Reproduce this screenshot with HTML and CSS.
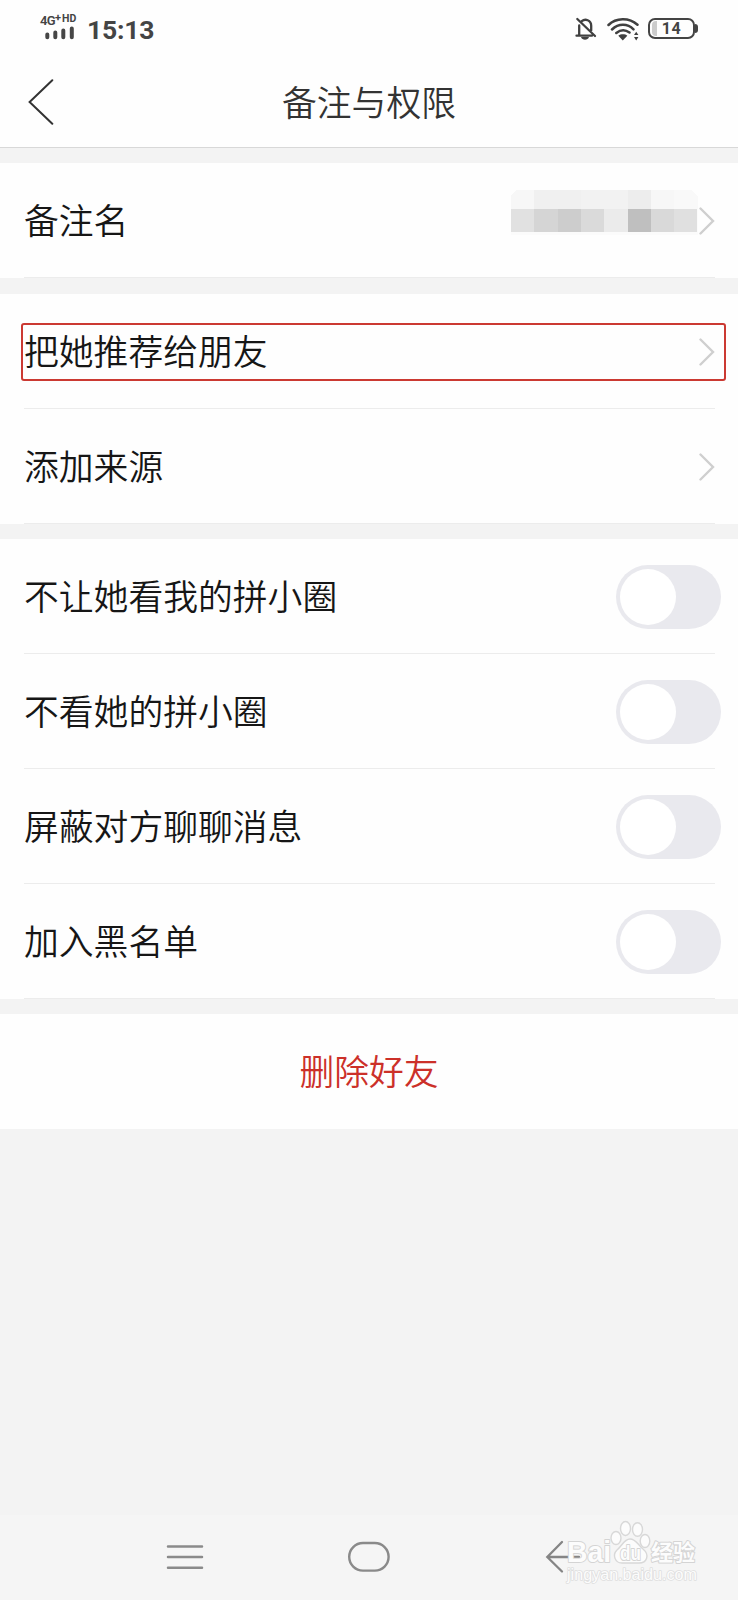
FILE: index.html
```html
<!DOCTYPE html>
<html lang="zh-CN">
<head>
<meta charset="utf-8">
<title>备注与权限</title>
<link rel="stylesheet" href="styles.css">
</head>
<body>
<svg class="defs" width="0" height="0">
  <symbol id="chevron" viewBox="0 0 16 28"><path d="M1.5 1.5L14 14L1.5 26.5" fill="none" stroke="#cfcfcf" stroke-width="2.4" stroke-linecap="round"/></symbol>
</svg>
<div class="screen">
  <header class="header">
    <div class="status">
      <div class="network">
        <div class="net-label"><span class="net-type">4G</span><span class="net-plus">+</span><span class="net-hd">HD</span></div>
        <svg width="30" height="14" viewBox="0 0 30 14" stroke="#464646" stroke-width="4" stroke-linecap="round"><path d="M2.3 8.5V11.3M10.3 6.5V11.3M18.3 4.5V11.3M26.8 2.5V11.3"/></svg>
      </div>
      <div class="clock">15:13</div>
      <div class="status-icons">
        <svg class="bell" width="22" height="24" viewBox="0 0 22 24" fill="none" stroke="#404040" stroke-width="2.3" stroke-linecap="round">
          <path d="M1.5 18.7H17M4.2 18V8.5M6.8 4.2C10 1.4 16.2 2.8 16.2 8.8V13.5M2.3 2L20 19"/>
          <path d="M6 20H14C13 23.7 7 23.7 6 20Z" fill="#404040" stroke="none"/>
        </svg>
        <svg class="wifi" width="32" height="24" viewBox="0 0 32 24" fill="none" stroke="#404040" stroke-width="2.5" stroke-linecap="round">
          <path d="M1.5 8C9 0.5 22 0.2 30.5 7.7M5 12.5C11.5 6.3 20.5 6.3 26.5 12.3M9.3 16C13.5 12.6 18.5 12.6 22.5 15.5"/>
          <path d="M11.3 18.7C14 16.8 18 16.8 20.3 18.7L15.8 23.5Z" fill="#404040" stroke="none"/>
          <path d="M29.2 14.7L31.4 18H27ZM29.2 23.4L31.4 20H27Z" fill="#404040" stroke="none"/>
        </svg>
        <div class="battery"><span class="charge"></span>14</div>
      </div>
    </div>
    <div class="titlebar">
      <svg width="26" height="46" viewBox="0 0 26 46"><path d="M24.3 1.2L1.6 23L24.3 44.8" fill="none" stroke="#333" stroke-width="2" stroke-linecap="round"/></svg>
      <h1>备注与权限</h1>
    </div>
  </header>

  <section class="group first">
    <div class="row">
      <span class="label">备注名</span>
      <div class="value">
        <svg class="mosaic" width="187" height="48" viewBox="0 0 187 48" shape-rendering="crispEdges">
          <path fill="#fbfbfb" d="M0 20H187V46H0Z"/>
          <path fill="#f7f7f7" d="M0 6L6 1H23V20H0Z"/><path fill="#f0f0f0" d="M23 1H70V20H23Z"/><path fill="#f2f2f2" d="M70 1H117V20H70Z"/><path fill="#ededed" d="M117 1H140V20H117Z"/><path fill="#f7f7f7" d="M140 1H163V20H140Z"/><path fill="#f9f9f9" d="M163 1H180L187 8V20H163Z"/>
          <path fill="#e1e1e1" d="M0 20H23V43H0Z"/><path fill="#d5d5d5" d="M23 20H47V43H23Z"/><path fill="#cdcdcd" d="M47 20H70V43H47Z"/><path fill="#dadada" d="M70 20H93V43H70Z"/><path fill="#ebebeb" d="M93 20H117V43H93Z"/><path fill="#bfbfbf" d="M117 20H140V43H117Z"/><path fill="#d9d9d9" d="M140 20H163V43H140Z"/><path fill="#e0e0e0" d="M163 20H186V43H163Z"/>
        </svg>
        <svg class="chevron"><use href="#chevron"/></svg>
      </div>
    </div>
  </section>

  <section class="group">
    <div class="row marked"><span class="label">把她推荐给朋友</span><svg class="chevron"><use href="#chevron"/></svg></div>
    <div class="row"><span class="label">添加来源</span><svg class="chevron"><use href="#chevron"/></svg></div>
  </section>

  <section class="group">
    <div class="row"><span class="label">不让她看我的拼小圈</span><span class="toggle"></span></div>
    <div class="row"><span class="label">不看她的拼小圈</span><span class="toggle"></span></div>
    <div class="row"><span class="label">屏蔽对方聊聊消息</span><span class="toggle"></span></div>
    <div class="row"><span class="label">加入黑名单</span><span class="toggle"></span></div>
  </section>

  <section class="delete">删除好友</section>

  <nav class="nav">
    <svg width="38" height="28" viewBox="0 0 38 28"><path d="M2 3.5H36M2 14H36M2 24.7H36" stroke="#8a8a8a" stroke-width="2.5" stroke-linecap="round"/></svg>
    <svg class="home" width="44" height="32" viewBox="0 0 44 32"><rect x="2.2" y="2" width="39.4" height="27.6" rx="13.8" fill="none" stroke="#8a8a8a" stroke-width="2.4"/></svg>
    <svg class="back" width="38" height="34" viewBox="0 0 38 34"><path d="M18 2L3.3 17L18 31.5M4 17H35" fill="none" stroke="#858585" stroke-width="2.3" stroke-linecap="round"/></svg>
    <svg class="watermark" width="138" height="68" viewBox="0 0 138 68">
      <g fill="#fcfcfc" stroke="#d8d8d8" stroke-width="1.4">
        <ellipse cx="52" cy="20" rx="5" ry="6.5"/><ellipse cx="61.5" cy="10.5" rx="5" ry="7"/><ellipse cx="73.5" cy="11.5" rx="5" ry="6.8"/><ellipse cx="81" cy="23" rx="4.8" ry="6.5"/>
        <path d="M66 21C60 21 58 28 53 32C48 37 51 45 58 45H75C83 45 86 37 79 31C74 27 72 21 66 21Z"/>
      </g>
      <g class="wm-text">
        <text class="wm-brand" x="3" y="43.5" textLength="44" lengthAdjust="spacingAndGlyphs">Bai</text>
        <text class="wm-du" x="56" y="42" textLength="21" lengthAdjust="spacingAndGlyphs">du</text>
        <text class="wm-cn" x="87" y="42">经验</text>
        <text class="wm-url" x="3" y="61.5" textLength="130" lengthAdjust="spacingAndGlyphs">jingyan.baidu.com</text>
      </g>
    </svg>
  </nav>
</div>
</body>
</html>
```
FILE: styles.css
```css
*, *::before, *::after { box-sizing: border-box; }
body {
  margin: 0;
  background: #f3f3f3;
  color: #161616;
  font-family: "Noto Sans CJK SC", sans-serif;
}
.defs { display: block; position: absolute; }
.screen {
  width: 738px;
  height: 1600px;
  display: flex;
  flex-direction: column;
}
.header {
  height: 148px;
  background: #fefefe;
  border-bottom: 1px solid #d8d8d8;
  margin-bottom: 15px;
  flex: none;
}
.status {
  height: 58px;
  display: flex;
  padding: 14px 40px 0 40px;
  color: #444;
  font-family: Roboto, sans-serif;
}
.network { width: 47px; }
.net-label {
  display: flex;
  height: 12px;
  line-height: 12px;
  font-weight: 700;
}
.net-type { font-size: 13px; font-weight: 600; letter-spacing: -.7px; line-height: 13px; }
.net-plus { font-size: 11px; line-height: 7px; margin-right: 1px; }
.net-hd { font-size: 10.5px; line-height: 9px; letter-spacing: .2px; }
.network svg { display: block; margin: 0 0 0 5px; }
.clock {
  font-size: 26.5px;
  font-weight: 700;
  line-height: 32px;
  letter-spacing: -.2px;
}
.status-icons {
  display: flex;
  margin-left: auto;
  padding-top: 3px;
}
.bell { margin-right: 10px; }
.wifi { margin-right: 9px; }
.battery {
  position: relative;
  width: 47px;
  height: 21px;
  margin: 1px 3px 0 0;
  border: 2px solid #444;
  border-radius: 7px;
  text-align: center;
  font-size: 16px;
  font-weight: 700;
  line-height: 18px;
  letter-spacing: .5px;
}
.battery::after {
  content: "";
  position: absolute;
  right: -5px;
  top: 4px;
  width: 3px;
  height: 9px;
  border-radius: 0 3px 3px 0;
  background: #444;
}
.charge {
  position: absolute;
  left: 2px;
  top: 1px;
  width: 5px;
  height: 15px;
  border-radius: 4px 0 0 4px;
  background: #ccc;
}
.titlebar {
  display: grid;
  grid-template-columns: 26px 1fr 26px;
  align-items: center;
  height: 88px;
  padding: 0 28px;
}
.titlebar h1 {
  margin: 0;
  padding-bottom: 3px;
  text-align: center;
  font-size: 34.8px;
  font-weight: 350;
  color: #333;
  line-height: 50px;
}
.group {
  background: #fefefe;
  margin-bottom: 15px;
  flex: none;
}
.group.first { margin-bottom: 16px; }
.row {
  position: relative;
  display: flex;
  align-items: center;
  justify-content: space-between;
  height: 115px;
  padding: 0 17px 0 24px;
  font-size: 34.8px;
  font-weight: 350;
  line-height: 50px;
}
.label { padding-bottom: 4px; }
.row::after {
  content: "";
  position: absolute;
  left: 24px;
  right: 23px;
  bottom: 0;
  height: 1px;
  background: #ececec;
}
.chevron {
  width: 16px;
  height: 28px;
  margin-right: 6px;
}
.value { display: flex; align-items: center; gap: 1px; }
.mosaic { margin-top: -15px; }
.marked::before {
  content: "";
  position: absolute;
  left: 21px;
  top: 29px;
  width: 705px;
  height: 58px;
  border: 2px solid #cb3932;
  border-radius: 3px;
}
.toggle {
  width: 105px;
  height: 64px;
  padding: 4px;
  border-radius: 32px;
  background: #e9e9ee;
}
.toggle::before {
  content: "";
  display: block;
  width: 56px;
  height: 56px;
  border-radius: 50%;
  background: #fff;
}
.delete {
  flex: none;
  height: 115px;
  background: #fefefe;
  text-align: center;
  font-size: 34.8px;
  font-weight: 350;
  line-height: 113px;
  color: #cc3029;
}
.nav {
  position: relative;
  display: flex;
  align-items: center;
  height: 85px;
  margin-top: auto;
  padding: 0 0 2px 166px;
  background: #f5f5f5;
}
.home { margin-left: 143px; }
.back { margin-left: 153px; }
.watermark {
  position: absolute;
  left: 564px;
  top: 3px;
}
.wm-text {
  font-family: "Liberation Sans", "Noto Sans CJK SC", sans-serif;
  fill: #fcfcfc;
  stroke: #d4d4d4;
  stroke-width: 2px;
  stroke-linejoin: round;
  paint-order: stroke;
}
.wm-brand { font-size: 30px; font-weight: 700; }
.wm-du { font-size: 21px; font-weight: 700; }
.wm-cn { font-size: 22px; font-weight: 700; }
.wm-url { font-size: 16px; stroke: #dedede; stroke-width: 1.6px; }
```
